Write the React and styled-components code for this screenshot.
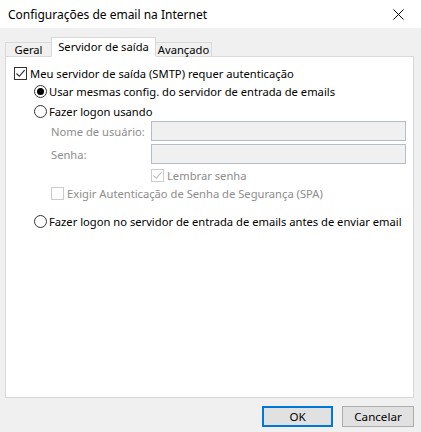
import React from "react";
import styled, { createGlobalStyle } from "styled-components";

const Global = createGlobalStyle`
  html, body { margin: 0; padding: 0; background: #f0f0f0; }
  body { font-family: "Noto Sans", "Open Sans", sans-serif; font-size: 11.2px; color: #000; }
  * { box-sizing: border-box; }
`;

const Window = styled.div`
  width: 421px;
  height: 432px;
  display: flex;
  flex-direction: column;
  background: #f0f0f0;
`;

const TitleBar = styled.div`
  height: 28px;
  background: #fff;
  display: flex;
  align-items: center;
  justify-content: space-between;
  padding: 0 8px 0 8px;
  font-size: 12px;
`;

const CloseButton = styled.div`
  width: 30px;
  height: 28px;
  display: flex;
  align-items: center;
  justify-content: center;
`;

const Body = styled.div`
  flex: 1;
  display: flex;
  flex-direction: column;
  padding: 9px 7px 0 5px;
`;

const TabRow = styled.div`
  display: flex;
  align-items: flex-end;
  height: 20px;
  position: relative;
  z-index: 1;
  margin-bottom: -1px;
`;

const Tab = styled.div`
  width: ${(p) => p.$w}px;
  height: ${(p) => (p.$active ? "20px" : "15px")};
  padding: ${(p) => (p.$active ? "0 0 2px" : "0")};
  display: flex;
  align-items: center;
  justify-content: center;
  background: ${(p) => (p.$active ? "#fff" : "#f0f0f0")};
  border: 1px solid #d9d9d9;
  border-bottom: ${(p) => (p.$active ? "1px solid #fff" : "1px solid #d9d9d9")};
  margin-left: ${(p) => (p.$active ? "-1px" : "0")};
  margin-right: ${(p) => (p.$active ? "-1px" : "0")};
  position: relative;
  z-index: ${(p) => (p.$active ? 2 : 1)};
`;

const Panel = styled.div`
  height: 342px;
  background: #fff;
  border: 1px solid #d9d9d9;
  padding: 8px 0 0 8px;
  display: flex;
  flex-direction: column;
`;

const Row = styled.div`
  display: flex;
  align-items: center;
  height: ${(p) => p.$h || 20}px;
  padding-left: ${(p) => p.$indent || 0}px;
  color: ${(p) => (p.$disabled ? "#8d8d8d" : "#000")};
  white-space: nowrap;
`;

const Box = styled.span`
  width: 13px;
  height: 13px;
  border: 1px solid ${(p) => (p.$disabled ? "#cccccc" : "#333")};
  background: #fff;
  display: inline-flex;
  align-items: center;
  justify-content: center;
  margin-right: 3px;
  flex: none;
`;

const Radio = styled.span`
  width: 13px;
  height: 13px;
  border: 1px solid #333;
  border-radius: 50%;
  background: #fff;
  display: inline-flex;
  align-items: center;
  justify-content: center;
  margin-right: 2px;
  flex: none;
  &::after {
    content: "";
    display: ${(p) => (p.$checked ? "block" : "none")};
    width: 7px;
    height: 7px;
    border-radius: 50%;
    background: #000;
  }
`;

const Label = styled.span`
  width: 100px;
  flex: none;
`;

const Field = styled.div`
  width: 255px;
  height: 20px;
  background: #f0f0f0;
  border: 1px solid #b5bcc6;
`;

const Spacer = styled.div`
  height: ${(p) => p.$h}px;
  flex: none;
`;

const Footer = styled.div`
  display: flex;
  justify-content: flex-end;
  gap: 9px;
  padding: 8px 0 0 0;
  font-size: 11.6px;
`;

const Button = styled.div`
  width: ${(p) => (p.$primary ? "71px" : "72px")};
  height: 21px;
  display: flex;
  align-items: center;
  justify-content: center;
  background: #e1e1e1;
  border: ${(p) => (p.$primary ? "2px solid #0078d7" : "1px solid #adadad")};
`;

const Check = ({ color }) => (
  <svg width="11" height="11" viewBox="0 0 11 11">
    <path d="M1.5 5.5 L4.3 8.3 L9.6 2.2" fill="none" stroke={color} strokeWidth="1.1" />
  </svg>
);

export default function App() {
  return (
    <>
      <Global />
      <Window>
        <TitleBar>
          <span>Configurações de email na Internet</span>
          <CloseButton>
            <svg width="11" height="11" viewBox="0 0 11 11">
              <path d="M0.5 0.5 L10.5 10.5 M10.5 0.5 L0.5 10.5" stroke="#000" strokeWidth="1" />
            </svg>
          </CloseButton>
        </TitleBar>
        <Body>
          <TabRow>
            <Tab $w={47}>Geral</Tab>
            <Tab $w={105} $active>Servidor de saída</Tab>
            <Tab $w={57}>Avançado</Tab>
          </TabRow>
          <Panel>
            <Row $h={16}>
              <Box><Check color="#222" /></Box>
              Meu servidor de saída (SMTP) requer autenticação
            </Row>
            <Row $h={20} $indent={20}>
              <Radio $checked />
              Usar mesmas config. do servidor de entrada de emails
            </Row>
            <Row $h={20} $indent={20}>
              <Radio />
              Fazer logon usando
            </Row>
            <Row $h={20} $indent={37} $disabled>
              <Label>Nome de usuário:</Label>
              <Field />
            </Row>
            <Spacer $h={3} />
            <Row $h={20} $indent={37} $disabled>
              <Label>Senha:</Label>
              <Field />
            </Row>
            <Spacer $h={2} />
            <Row $h={18} $indent={137} $disabled>
              <Box $disabled><Check color="#bdbdbd" /></Box>
              Lembrar senha
            </Row>
            <Row $h={18} $indent={37} $disabled>
              <Box $disabled />
              Exigir Autenticação de Senha de Segurança (SPA)
            </Row>
            <Spacer $h={9} />
            <Row $h={20} $indent={20}>
              <Radio />
              Fazer logon no servidor de entrada de emails antes de enviar email
            </Row>
          </Panel>
          <Footer>
            <Button $primary>OK</Button>
            <Button>Cancelar</Button>
          </Footer>
        </Body>
      </Window>
    </>
  );
}
